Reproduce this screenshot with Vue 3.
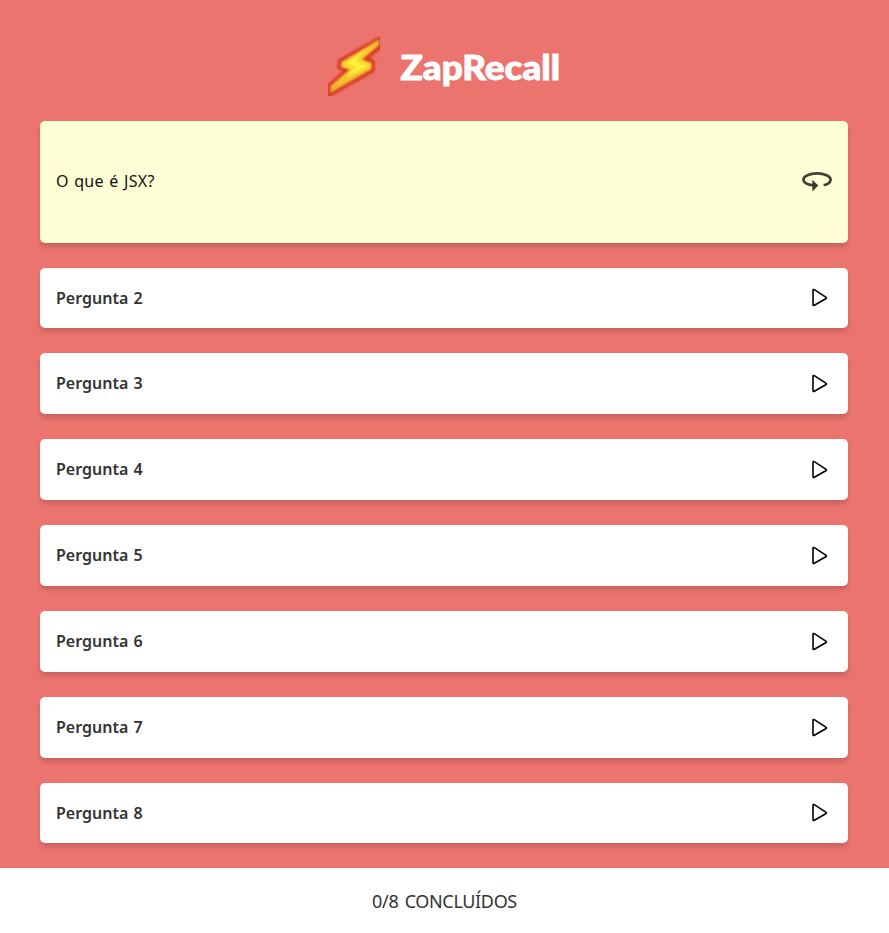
<script setup>
const questions = [2, 3, 4, 5, 6, 7, 8]
</script>

<template>
  <div class="screen">
    <header class="logo">
      <svg class="bolt" width="52" height="60" viewBox="0 0 52 60">
        <defs>
          <clipPath id="frame"><rect width="52" height="60" /></clipPath>
          <linearGradient id="gold" x1="0" y1="0" x2="0.25" y2="1">
            <stop offset="0" stop-color="#f0a030" />
            <stop offset="0.35" stop-color="#f7c62f" />
            <stop offset="0.6" stop-color="#fbdc2e" />
            <stop offset="1" stop-color="#f09c2c" />
          </linearGradient>
          <filter id="soft" x="-20%" y="-20%" width="140%" height="140%"><feGaussianBlur stdDeviation="0.9" /></filter>
        </defs>
        <g clip-path="url(#frame)">
          <path d="M54 0L11 24L10 32L16 35L0 49V61L46 35L46 25L40 22L54 11Z" fill="#d63a28" stroke="#d63a28" stroke-width="1.6" stroke-linejoin="round" filter="url(#soft)" />
          <path d="M51 3.5L13.5 26L13 31L22 33.5L2.5 50V57L43.5 33L43.5 27L34 23.5L51 9Z" fill="url(#gold)" filter="url(#soft)" />
          <path d="M38 13L19 27L29 30L17 42L39 30L27 25Z" fill="#fff43a" filter="url(#soft)" />
        </g>
      </svg>
      <svg class="wordmark" width="160" height="46" viewBox="0 0 160 46">
        <text x="0.5" y="31.5" textLength="159.5" lengthAdjust="spacingAndGlyphs">ZapRecall</text>
      </svg>
    </header>
    <main class="cards">
      <section class="card open">
        <p class="question">O que é JSX?</p>
        <svg class="turn" width="30" height="20" viewBox="0 0 30 20">
          <path d="M11 13.4C5 12.7 1.4 10.6 1.4 7.6C1.4 4 7.5 1.4 15 1.4S28.6 4 28.6 7.6C28.6 10.4 25.8 12.4 21.6 13.3" fill="none" stroke="#41413a" stroke-width="2.7" />
          <path d="M10.3 7.7L16.3 13.6L10.3 19.5Z" fill="#393932" />
        </svg>
      </section>
      <section v-for="n in questions" :key="n" class="card">
        <p class="title">Pergunta {{ n }}</p>
        <svg class="play" width="20" height="23" viewBox="0 0 20 23">
          <path d="M3 4.4V18.6Q3 20 4.3 19.3L15.8 12.7Q17 12 15.8 11.2L4.3 3.7Q3 3 3 4.4Z" fill="none" stroke="#000" stroke-width="1.6" stroke-linejoin="round" />
        </svg>
      </section>
    </main>
    <footer class="footer"><span class="count">0/8 CONCLUÍDOS</span></footer>
  </div>
</template>

<style>
body { margin: 0; background: #ec746f; }
</style>

<style scoped>
.screen {
  height: 933px;
  display: flex;
  flex-direction: column;
  overflow: hidden;
  background: #ec746f;
  font-family: "Noto Sans", "Open Sans", sans-serif;
}
.logo {
  box-sizing: border-box;
  flex: none;
  height: 121px;
  padding: 36px 0 0 328px;
  display: flex;
  gap: 20px;
}
.bolt { flex: none; }
.wordmark { margin-top: 12px; overflow: visible; }
.wordmark text {
  font-family: Lato, sans-serif;
  font-weight: 900;
  font-size: 35px;
  fill: #fff;
  stroke: #fff;
  stroke-width: 0.9px;
}
.cards {
  display: flex;
  flex-direction: column;
  gap: 25px;
  padding: 0 41px 0 40px;
}
.card {
  box-sizing: border-box;
  flex: none;
  height: 60.85px;
  padding: 0 18px 0 16px;
  display: flex;
  align-items: center;
  justify-content: space-between;
  border-radius: 5px;
  background: #fff;
  box-shadow: 0 4px 5px rgba(0, 0, 0, 0.15);
}
.card.open {
  height: 121.5px;
  padding-right: 16px;
  background: #ffffd5;
}
p { margin: 0; line-height: 20px; white-space: nowrap; }
.title {
  padding-bottom: 0.6px;
  color: #333;
  font-size: 16px;
  font-weight: 600;
  letter-spacing: 0;
  word-spacing: 1px;
}
.question {
  padding-bottom: 2px;
  color: #111;
  font-size: 16px;
  letter-spacing: 0.35px;
  word-spacing: 0.8px;
}
.footer {
  flex: none;
  height: 65px;
  margin-top: auto;
  display: flex;
  align-items: center;
  justify-content: center;
  background: #fff;
}
.count {
  color: #333;
  font-size: 18px;
  line-height: 22px;
  letter-spacing: -0.35px;
  word-spacing: 2px;
}
</style>
